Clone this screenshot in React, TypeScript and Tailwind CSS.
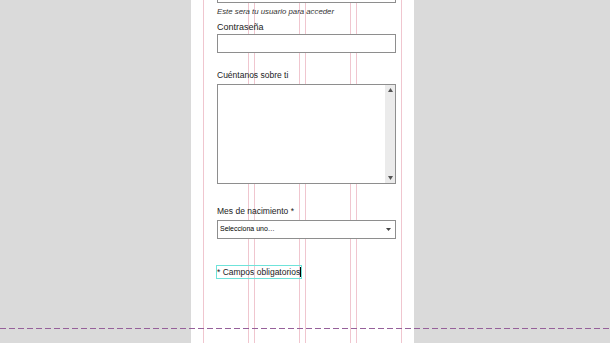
import React from 'react';

const font = { fontFamily: '"Liberation Sans", Arial, sans-serif' };

const Label: React.FC<{ text: string; className?: string }> = ({ text, className }) => (
  <div className={`text-[8.5px] leading-[11px] text-[#222] ${className ?? ''}`}>{text}</div>
);

const App: React.FC = () => {
  return (
    <div className="relative w-[610px] h-[343px] overflow-hidden bg-[#dadada]" style={font}>
      {/* page column */}
      <div className="relative ml-[191px] w-[223px] h-full bg-white flex flex-col">
        {/* column guides */}
        <div className="absolute inset-0 px-[12px] grid grid-cols-4 gap-[5px]">
          <div className="border-x border-[#f0c6cf]" />
          <div className="border-x border-[#f0c6cf]" />
          <div className="border-x border-[#f0c6cf]" />
          <div className="border-x border-[#f0c6cf]" />
        </div>

        <form className="relative -mt-[16px] pl-[26px] pr-[18px] flex flex-col">
          <div className="h-[19px] border border-[#8e8e8e] bg-white" />
          <div className="mt-[4px] text-[7.8px] leading-[10px] italic text-[#333]">
            Este sera tu usuario para acceder
          </div>

          <Label text="Contraseña" className="mt-[5px] text-[9px]" />
          <div className="mt-[1px] h-[19px] border border-[#8e8e8e] bg-white" />

          <Label text="Cuéntanos sobre ti" className="mt-[17px]" />
          <div className="mt-[3px] h-[100px] border border-[#8e8e8e] bg-white flex justify-end">
            <div className="w-[10px] h-full bg-[#ebebeb] flex flex-col items-center justify-between py-[3px]">
              <svg width="5" height="4" viewBox="0 0 5 4">
                <path d="M0 4 L2.5 0 L5 4 Z" fill="#555" />
              </svg>
              <svg width="5" height="4" viewBox="0 0 5 4">
                <path d="M0 0 L2.5 4 L5 0 Z" fill="#555" />
              </svg>
            </div>
          </div>

          <Label text="Mes de nacimiento *" className="mt-[22px]" />
          <div className="mt-[3px] h-[19px] border border-[#8e8e8e] bg-white flex items-center justify-between pl-[2px] pr-[4px]">
            <span className="text-[7px] text-black">Selecciona uno…</span>
            <svg width="5" height="3" viewBox="0 0 5 3">
              <path d="M0 0 L2.5 3 L5 0 Z" fill="#444" />
            </svg>
          </div>

          <div className="mt-[27px] flex">
            <div className="h-[12px] leading-[11px] text-[8.5px] text-[#222] outline outline-1 outline-[#6fe3da] flex items-center">
              * Campos obligatorios
              <span className="w-px h-[10px] bg-black" />
            </div>
          </div>
        </form>
      </div>

      {/* baseline guide */}
      <div className="absolute left-0 right-0 top-[328px] h-px bg-[repeating-linear-gradient(90deg,#96609a_0_6px,transparent_6px_9px)]" />
    </div>
  );
};

export default App;
